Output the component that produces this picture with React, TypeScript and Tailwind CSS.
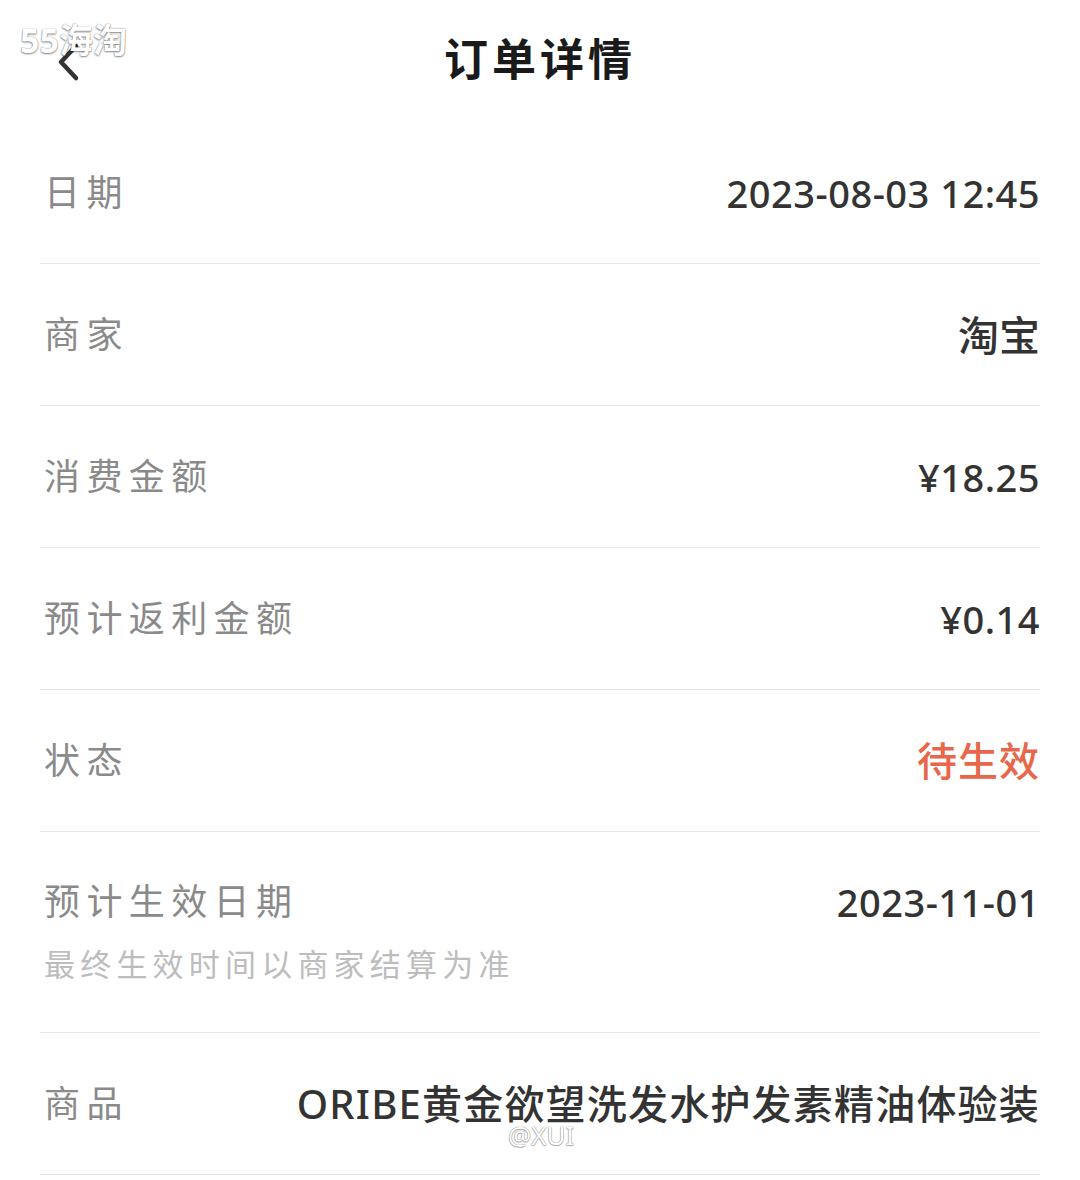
import React from "react";

const FONT = '"Noto Sans", "Noto Sans CJK SC", sans-serif';

function Row({ label, value, valueClass, sub, tall }: { label: string; value: string; valueClass?: string; sub?: string; tall?: boolean }) {
  return (
    <div className={`mx-[40px] border-b border-[#e8e8e8] flex flex-col justify-center ${tall ? "h-[201px]" : "h-[142px]"}`}>
      <div className="flex items-center justify-between">
        <span className="text-[36px] leading-[44px] tracking-[6.4px] text-[#8a8a8a] pl-[4px]">{label}</span>
        <span className={`leading-[44px] ${valueClass ?? "text-[38px] text-[#333333] font-medium tracking-[0.5px]"}`}>{value}</span>
      </div>
      {sub && (
        <div className="text-[31px] leading-[40px] tracking-[5.2px] text-[#bdbdbd] pl-[4px] mt-[20px]">{sub}</div>
      )}
    </div>
  );
}

export default function App() {
  return (
    <div className="w-[1080px] h-[1180px] bg-white relative overflow-hidden" style={{ fontFamily: FONT }}>
      <div className="h-[122px] relative flex items-center justify-center">
        <button className="absolute left-[52px] top-[40px] w-[36px] h-[44px]">
          <svg width="36" height="44" viewBox="0 0 36 44" fill="none">
            <path d="M24 6 L9 22 L24 38" stroke="#333" strokeWidth="4.5" strokeLinecap="round" strokeLinejoin="round" />
          </svg>
        </button>
        <h1 className="text-[44px] font-bold text-[#1a1a1a] tracking-[4px] -mt-[4px]">订单详情</h1>
      </div>
      <Row label="日期" value="2023-08-03 12:45" />
      <Row label="商家" value="淘宝" valueClass="text-[41px] text-[#333333] font-medium" />
      <Row label="消费金额" value="¥18.25" />
      <Row label="预计返利金额" value="¥0.14" />
      <Row label="状态" value="待生效" valueClass="text-[40px] text-[#e8664a] font-medium tracking-[1px]" />
      <Row label="预计生效日期" value="2023-11-01" sub="最终生效时间以商家结算为准" tall />
      <Row label="商品" value="ORIBE黄金欲望洗发水护发素精油体验装" valueClass="text-[40px] text-[#333333] font-medium tracking-[1.2px]" />

      <div
        className="absolute left-[20px] top-[18px] text-[34px] font-bold text-white leading-[44px]"
        style={{ textShadow: "0 1px 2px rgba(0,0,0,0.45), 0 0 1px rgba(0,0,0,0.5)" }}
      >
        55海淘
      </div>
      <div
        className="absolute left-[508px] top-[1118px] text-[26px] text-white leading-[34px]"
        style={{ textShadow: "0 0 1px #888, 0 0 1px #888, 0 1px 1px rgba(0,0,0,0.3)" }}
      >
        @XUI
      </div>
    </div>
  );
}
